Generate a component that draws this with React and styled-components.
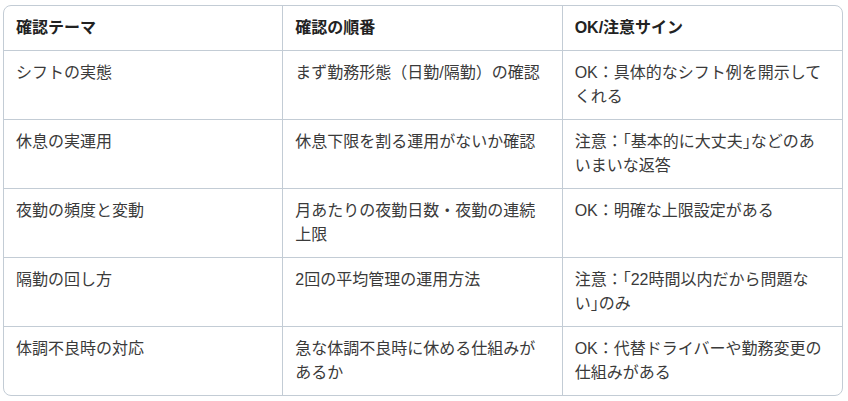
import React from "react";
import styled, { createGlobalStyle } from "styled-components";

const GlobalStyle = createGlobalStyle`
  html, body {
    margin: 0;
    padding: 0;
    background: #ffffff;
  }
  body {
    font-family: "Liberation Sans", "Noto Sans CJK JP", sans-serif;
    color: #333333;
  }
`;

const Page = styled.div`
  padding: 5px 5px 0 3px;
`;

const TableWrap = styled.div`
  width: 840px;
  border: 1px solid #c3ccd5;
  border-radius: 8px;
  overflow: hidden;
  box-sizing: border-box;
`;

const Table = styled.table`
  width: 100%;
  border-collapse: separate;
  border-spacing: 0;
  table-layout: fixed;
  font-size: 16px;
  line-height: 24px;
`;

const HeadCell = styled.th`
  text-align: left;
  font-weight: 700;
  color: #222222;
  padding: 10px 12px;
  border-bottom: 1px solid #c3ccd5;
  border-right: ${(p) => (p.$last ? "none" : "1px solid #c3ccd5")};
  vertical-align: top;
`;

const Cell = styled.td`
  padding: 10px 12px;
  color: #3a3a3a;
  vertical-align: top;
  border-bottom: ${(p) => (p.$lastRow ? "none" : "1px solid #c3ccd5")};
  border-right: ${(p) => (p.$last ? "none" : "1px solid #c3ccd5")};
  height: 48px;
`;

const headers = ["確認テーマ", "確認の順番", "OK/注意サイン"];

const rows = [
  ["シフトの実態", "まず勤務形態（日勤/隔勤）の確認", "OK：具体的なシフト例を開示してくれる"],
  ["休息の実運用", "休息下限を割る運用がないか確認", "注意：｢基本的に大丈夫｣などのあいまいな返答"],
  ["夜勤の頻度と変動", "月あたりの夜勤日数・夜勤の連続上限", "OK：明確な上限設定がある"],
  ["隔勤の回し方", "2回の平均管理の運用方法", "注意：｢22時間以内だから問題ない｣のみ"],
  ["体調不良時の対応", "急な体調不良時に休める仕組みがあるか", "OK：代替ドライバーや勤務変更の仕組みがある"],
];

export default function App() {
  return (
    <Page>
      <GlobalStyle />
      <TableWrap>
        <Table>
          <thead>
            <tr>
              {headers.map((h, i) => (
                <HeadCell key={h} $last={i === headers.length - 1}>
                  {h}
                </HeadCell>
              ))}
            </tr>
          </thead>
          <tbody>
            {rows.map((r, ri) => (
              <tr key={ri}>
                {r.map((c, ci) => (
                  <Cell
                    key={ci}
                    $last={ci === r.length - 1}
                    $lastRow={ri === rows.length - 1}
                  >
                    {c}
                  </Cell>
                ))}
              </tr>
            ))}
          </tbody>
        </Table>
      </TableWrap>
    </Page>
  );
}
